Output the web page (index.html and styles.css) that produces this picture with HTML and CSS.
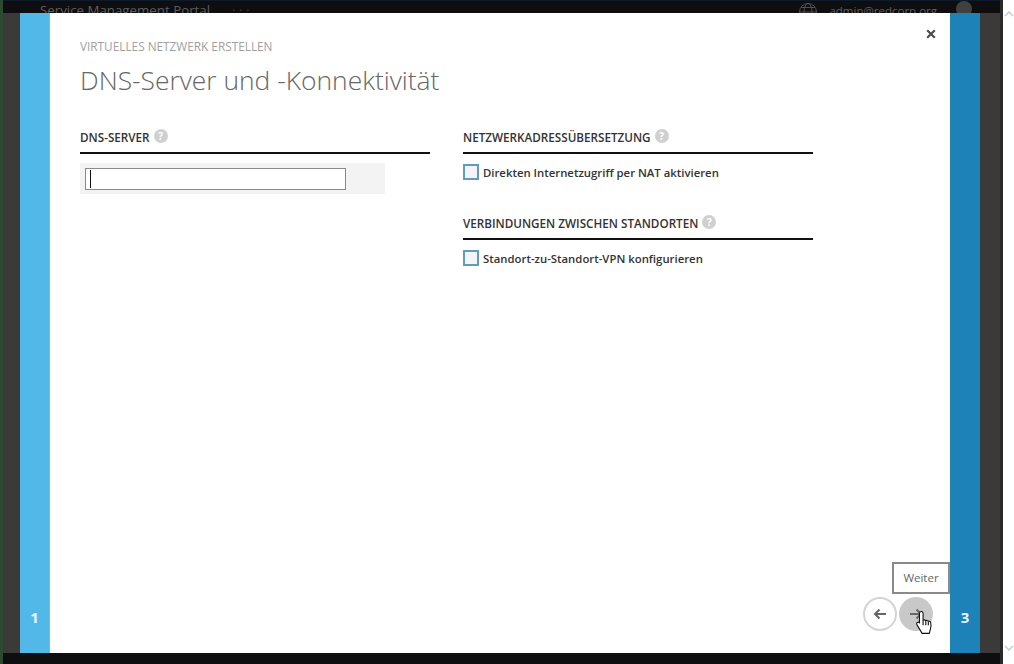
FILE: index.html
```html
<!DOCTYPE html>
<html lang="de">
<head>
<meta charset="utf-8">
<title>DNS-Server und -Konnektivität</title>
<link rel="stylesheet" href="styles.css">
</head>
<body>
<div class="app">
  <div class="shell">
    <header class="topbar">
      <span class="brand-group"><span class="brand">Service Management Portal</span><span class="dots">· · ·</span></span>
      <span class="account">
        <svg class="globe" viewBox="0 0 20 20" width="20" height="20"><circle cx="10" cy="10" r="8.5"/><ellipse cx="10" cy="10" rx="4" ry="8.5"/><path d="M1.5 10h17M3 5.500h14M3 14.500h14"/></svg>
        <span class="mail">admin@redcorp.org</span>
        <span class="avatar"></span>
      </span>
    </header>
    <div class="middle">
      <main class="wizard">
        <div class="step step-prev"><span class="step-num">1</span></div>
        <div class="content">
          <div class="close-row">
            <svg class="close" viewBox="0 0 10 10" width="10" height="10"><path d="M1.200 1.200l7.600 7.600M8.800 1.200l-7.600 7.600"/></svg>
          </div>
          <p class="eyebrow">VIRTUELLES NETZWERK ERSTELLEN</p>
          <h1 class="title">DNS-Server und -Konnektivität</h1>
          <div class="columns">
            <section class="col">
              <h2 class="section-head">DNS-SERVER <span class="help">?</span></h2>
              <div class="field-band">
                <div class="field"><span class="caret"></span></div>
              </div>
            </section>
            <section class="col">
              <h2 class="section-head">NETZWERKADRESSÜBERSETZUNG <span class="help">?</span></h2>
              <label class="check"><span class="box"></span><span class="check-text">Direkten Internetzugriff per NAT aktivieren</span></label>
              <h2 class="section-head section-second">VERBINDUNGEN ZWISCHEN STANDORTEN <span class="help">?</span></h2>
              <label class="check"><span class="box"></span><span class="check-text">Standort-zu-Standort-VPN konfigurieren</span></label>
            </section>
          </div>
          <div class="footer">
            <div class="tooltip">Weiter</div>
            <div class="nav-buttons">
              <span class="nav nav-back">
                <svg viewBox="0 0 16 16" width="16" height="16"><path d="M14 8H3M7.500 3.500L3 8l4.500 4.500"/></svg>
              </span>
              <span class="nav nav-next">
                <svg viewBox="0 0 16 16" width="16" height="16"><path d="M2 8h11M8.500 3.500L13 8l-4.500 4.500"/></svg>
              </span>
              <svg class="cursor" viewBox="1 1 15 22" width="17" height="24"><path d="M5.500 1.500c1 0 1.700.7 1.700 1.700v6.300c.8-.5 1.900-.4 2.400.4.800-.5 1.900-.3 2.300.5.900-.4 2.100.1 2.300 1.100.4 2 .3 4.300-.3 6.200l-1 3.800H6.300L1.800 14c-.7-.9-.6-2 .1-2.500.7-.5 1.500-.3 2 .2V3.200c0-1 .6-1.700 1.600-1.700z"/><path class="cursor-lines" d="M7.200 10v4M9.700 10.500V14M12 11v3"/></svg>
            </div>
          </div>
        </div>
        <div class="step step-next"><span class="step-num">3</span></div>
      </main>
    </div>
    <div class="bottombar"></div>
  </div>
  <aside class="scrollbar">
    <svg viewBox="0 0 10 6" width="10" height="6"><path d="M1 5l4-4 4 4"/></svg>
    <svg viewBox="0 0 10 6" width="10" height="6"><path d="M1 1l4 4 4-4"/></svg>
  </aside>
</div>
</body>
</html>
```
FILE: styles.css
```css
* { box-sizing: border-box; }
html, body { margin: 0; height: 100%; overflow: hidden; }
body { font-family: "Open Sans", "Noto Sans", sans-serif; color: #222; background: #fff; }

.app { display: flex; width: 1014px; height: 664px; }
.shell { width: 1003px; height: 664px; display: flex; flex-direction: column; background: #3b3a39; border-left: 3px solid #2c4a30; border-right: 3px solid #2a2a2a; }

.topbar { height: 13px; flex: none; background: #0e0e10; border-top: 1px solid #0c1b2c; overflow: hidden; display: flex; justify-content: space-between; align-items: flex-start; color: #5e5e5e; padding: 0 28px 0 37px; font-size: 13.300px; line-height: 18px; }
.brand-group { display: flex; gap: 22px; }
.dots { color: #3a3a3a; }
.account { display: flex; align-items: flex-start; gap: 11px; font-size: 11.500px; }
.globe { fill: none; stroke: #4f4f4f; stroke-width: 1; margin-top: 1px; flex: none; }
.mail { margin-top: 1px; }
.avatar { width: 16px; height: 16px; border-radius: 50%; background: #404040; margin-left: 8px; }

.middle { flex: 1; display: flex; padding: 0 20px 0 17px; min-height: 0; }
.wizard { flex: 1; display: flex; }
.step { width: 30px; flex: none; display: flex; align-items: flex-end; justify-content: center; padding-bottom: 26px; color: #e8f6ff; font-weight: 700; font-size: 15px; line-height: 20px; }
.step-prev { background: #52b8e8; border-right: 1px solid #7fb8d4; }
.step-next { background: #1c82b8; }
.step-num { display: block; }

.content { flex: 1; background: #fff; display: flex; flex-direction: column; padding: 0 0 0 30px; min-width: 0; }
.close-row { height: 0; display: flex; justify-content: flex-end; }
.close { fill: none; stroke: #4d4d4d; stroke-width: 2.200; margin: 16px 14px 0 0; flex: none; }
.eyebrow { margin: 26px 0 0; font-size: 11.800px; line-height: 14px; font-weight: 400; color: #a0a0a0; }
.title { margin: 9px 0 0; font-size: 26.400px; line-height: 36px; font-weight: 300; color: #666; }

.columns { display: flex; gap: 33px; margin-top: 31px; }
.col { width: 350px; flex: none; }
.section-head { margin: 0; height: 25px; border-bottom: 2px solid #111; font-size: 11.700px; line-height: 16px; font-weight: 600; color: #333; display: flex; align-items: flex-start; gap: 4px; }
.section-second { margin-top: 35px; }
.help { width: 14px; height: 14px; border-radius: 50%; background: #d0d0d0; color: #fff; font-size: 10px; line-height: 14px; font-weight: 700; text-align: center; flex: none; }

.field-band { width: 305px; height: 31px; margin-top: 9px; padding: 5px 5px; background: #f3f3f3; }
.field { width: 261px; height: 22px; background: #fff; border: 1px solid #8a8a8a; padding: 1px 4px; }
.caret { display: block; width: 1px; height: 18px; background: #111; }

.check { display: flex; align-items: center; gap: 4px; margin-top: 10px; height: 16px; font-size: 11.350px; line-height: 16px; font-weight: 600; color: #333; }
.check-text { padding-top: 2px; }
.box { width: 16px; height: 16px; flex: none; border: 2px solid #5f9dbd; background: #f4f4f4; }

.footer { margin-top: auto; position: relative; height: 0; }
.tooltip { position: absolute; right: 0; bottom: 59px; width: 58px; height: 32px; border: 2px solid #8a8a8a; background: #fff; font-size: 11.500px; line-height: 28px; text-align: center; color: #666; }
.nav-buttons { position: absolute; right: 17px; bottom: 22px; display: flex; gap: 2px; }
.nav { width: 34px; height: 34px; border-radius: 50%; display: flex; align-items: center; justify-content: center; }
.nav svg { fill: none; stroke: #666; stroke-width: 2; }
.nav-back { border: 2px solid #d4d4d4; background: #fff; }
.nav-next { background: #c8c8c8; }
.cursor { position: absolute; right: 0; bottom: -4px; fill: #fff; stroke: #111; stroke-width: 1; }
.cursor-lines { fill: none; }

.bottombar { height: 11px; flex: none; background: #0e0e10; }

.scrollbar { width: 11px; height: 664px; background: #fff; display: flex; flex-direction: column; justify-content: space-between; align-items: center; padding: 11px 0 13px; }
.scrollbar svg { fill: none; stroke: #c4cdd2; stroke-width: 1.500; }
```
